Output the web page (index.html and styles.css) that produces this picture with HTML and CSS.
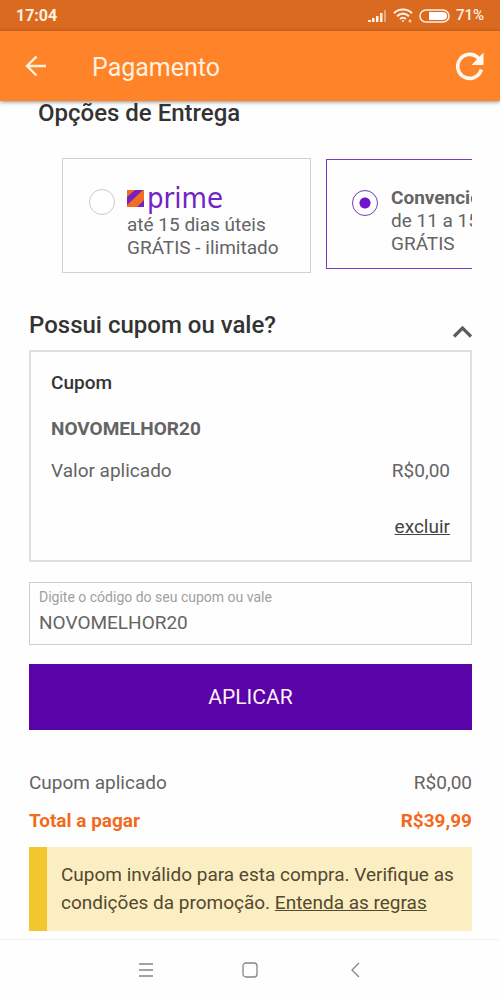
FILE: index.html
```html
<!DOCTYPE html>
<html lang="pt-BR">
<head>
<meta charset="utf-8">
<meta name="viewport" content="width=device-width, initial-scale=1">
<title>Pagamento</title>
<link rel="stylesheet" href="styles.css">
</head>
<body>
<div class="screen">
  <div class="status">
    <span class="clock">17:04</span>
    <span class="indicators">
      <svg width="19" height="14" viewBox="0 0 19 14" fill="#fff1e0"><path d="M0 11h3v2H0zM4 9h2.500v4H4zM8 7h2.500v6H8zM12 4h2.500v9H12z"/><path d="M16 1h2v12h-2z" opacity=".45"/></svg>
      <svg width="20" height="15" viewBox="0 0 20 15" fill="none" stroke="#fff1e0" stroke-width="2"><path d="M1 5.200C6 .4 14 .4 19 5.200M4 8.200c4-3.400 8-3.400 12 0M7 11c2-1.700 4-1.700 6 0"/><circle cx="10" cy="13" r="1" fill="#fff1e0" stroke="none"/><circle cx="17" cy="13" r="1" stroke-width="1"/></svg>
      <svg width="31" height="14" viewBox="0 0 31 14"><rect x="1" y="1" width="29" height="12" rx="6" fill="none" stroke="#fff1e0" stroke-width="1.500"/><path d="M10 3h14a4 4 0 0 1 0 8H10z" fill="#fff"/></svg>
      <span class="battery">71%</span>
    </span>
  </div>
  <header class="appbar">
    <button class="icon-button" aria-label="Voltar"><svg width="22" height="22" viewBox="0 0 22 22" fill="none" stroke="#fff1e0" stroke-width="2.400"><path d="M21 11H2.500M11.500 1.500L2 11l9.500 9.500"/></svg></button>
    <h1 class="title">Pagamento</h1>
    <button class="icon-button" aria-label="Atualizar"><svg width="30" height="30" viewBox="0 0 30 30"><path d="M26.300 18.500A12 12 0 1 1 23.800 7.500" fill="none" stroke="#fff8ef" stroke-width="3.600"/><path d="M28.500 1.500v12.500H16.500z" fill="#fff8ef"/></svg></button>
  </header>
  <main class="content">
    <h2 class="heading delivery-heading">Opções de Entrega</h2>
    <div class="options">
      <label class="option">
        <input class="radio" type="radio" name="entrega">
        <span class="option-text">
          <span class="brand"><svg width="17" height="17" viewBox="0 0 17 17"><path fill="#f36d21" d="M0 0h17v17H0z"/><path fill="#7422c3" d="M8 0h8L0 15V7zM17 10v7H10z"/></svg><span class="brand-name">prime</span></span>
          <span>até 15 dias úteis</span>
          <span>GRÁTIS - ilimitado</span>
        </span>
      </label>
      <label class="option option-selected">
        <input class="radio" type="radio" name="entrega" checked>
        <span class="option-text">
          <strong>Convencional</strong>
          <span>de 11 a 15 dias úteis</span>
          <span>GRÁTIS</span>
        </span>
      </label>
    </div>
    <div class="section-head">
      <h2 class="heading">Possui cupom ou vale?</h2>
      <button class="icon-button" aria-label="Recolher"><svg width="20" height="14" viewBox="0 0 20 14" fill="none" stroke="#5c5c5c" stroke-width="3.200"><path d="M2 11.500L10.500 3l8.500 8.500"/></svg></button>
    </div>
    <section class="coupon">
      <h3 class="coupon-title">Cupom</h3>
      <strong class="coupon-code">NOVOMELHOR20</strong>
      <div class="row"><span>Valor aplicado</span><span>R$0,00</span></div>
      <a class="remove" href="#">excluir</a>
    </section>
    <form class="form">
      <div class="field">
        <label class="field-label" for="codigo">Digite o código do seu cupom ou vale</label>
        <input class="field-input" id="codigo" type="text" value="NOVOMELHOR20">
      </div>
      <button class="apply" type="button">APLICAR</button>
    </form>
    <div class="summary">
      <div class="row"><span>Cupom aplicado</span><span>R$0,00</span></div>
      <div class="row total"><span>Total a pagar</span><span>R$39,99</span></div>
    </div>
    <p class="notice">Cupom inválido para esta compra. Verifique as condições da promoção. <a href="#">Entenda as regras</a></p>
  </main>
  <nav class="system-nav">
    <button class="icon-button" aria-label="Recentes"><svg width="16" height="16" viewBox="0 0 16 16" stroke="#858585" stroke-width="1.300"><path d="M1 2h14M1 8h14M1 14h14"/></svg></button>
    <button class="icon-button" aria-label="Início"><svg width="16" height="16" viewBox="0 0 16 16" fill="none" stroke="#858585" stroke-width="1.300"><rect x="1" y="1" width="14" height="14" rx="3"/></svg></button>
    <button class="icon-button" aria-label="Voltar ao anterior"><svg width="16" height="16" viewBox="0 0 16 16" fill="none" stroke="#858585" stroke-width="1.300"><path d="M13 1L6 8l7 7"/></svg></button>
  </nav>
</div>
</body>
</html>
```
FILE: styles.css
```css
* { box-sizing: border-box; }
body {
  margin: 0;
  background: #fefefe;
  color: #646464;
  font: 19px/23px Roboto, "Noto Sans", sans-serif;
}
h1, h2, h3, p { margin: 0; }
svg { display: block; }
button { border: 0; font: inherit; }
.screen { display: flex; flex-direction: column; min-height: 100vh; }
.status {
  display: flex;
  justify-content: space-between;
  align-items: center;
  height: 31px;
  padding: 0 16px;
  background: #db6a21;
  color: #fff1e0;
  font-size: 16px;
  font-weight: 700;
}
.indicators { display: flex; align-items: center; gap: 6px; }
.battery { font-size: 15px; font-weight: 500; }
.appbar {
  display: flex;
  align-items: center;
  height: 70px;
  padding: 0 15px 0 25px;
  background: #ff8429;
  box-shadow: 0 1px 4px rgba(0, 0, 0, .45);
}
.icon-button { padding: 0; background: none; }
.title {
  flex: 1;
  padding: 4px 0 0 45px;
  color: #fff1e0;
  font-size: 25px;
  font-weight: 400;
  line-height: 30px;
}
.content { flex: 1; padding: 0 28px 8px 29px; }
.heading { color: #333; font-size: 24px; font-weight: 500; line-height: 28px; }
.delivery-heading { padding: 0 9px; line-height: 24px; }
.options {
  display: flex;
  align-items: flex-start;
  gap: 15px;
  margin: 33px 0 0 33px;
  overflow: hidden;
}
.option {
  display: flex;
  flex: none;
  gap: 12px;
  width: 249px;
  padding: 24px 26px 13px 26px;
  border: 1px solid #d2d2d2;
  white-space: nowrap;
}
.option-selected { margin-top: 1px; padding: 26px 26px 13px 25px; gap: 13px; border-color: #773bbb; }
.radio {
  appearance: none;
  flex: none;
  width: 26px;
  height: 26px;
  margin: 6px 0 0;
  border: 1px solid #c8c8c8;
  border-radius: 50%;
  background: #fff;
}
.option-selected .radio { margin-top: 4px; }
.radio:checked {
  border-color: #773bbb;
  background: radial-gradient(circle, #7014cf 5px, #fff 6px);
}
.option-text { display: flex; flex-direction: column; }
.brand { display: flex; align-items: center; gap: 3px; height: 30px; }
.brand-name { color: #7422c3; font: 29px/30px "DejaVu Sans Condensed", "Noto Sans", sans-serif; }
.section-head {
  display: flex;
  justify-content: space-between;
  align-items: flex-end;
  margin-top: 38px;
  padding-bottom: 11px;
}
.coupon {
  display: flex;
  flex-direction: column;
  padding: 19px 20px 22px;
  border: 2px solid #dedede;
}
.coupon-title { color: #333; font-size: 19px; font-weight: 500; }
.coupon-code { margin-top: 23px; }
.row { display: flex; justify-content: space-between; }
.coupon .row { margin-top: 19px; }
.remove { align-self: flex-end; margin-top: 33px; color: #444; }
.form { display: grid; gap: 19px; margin-top: 20px; }
.field { padding: 3px 9px 8px; border: 1px solid #cecece; }
.field-label { display: block; color: #a0a0a0; font-size: 14px; line-height: 22px; }
.field-input {
  display: block;
  width: 100%;
  height: 28px;
  padding: 0;
  border: 0;
  outline: 0;
  background: none;
  color: #646464;
  font: inherit;
}
.apply { height: 66px; background: #5903a9; color: #fff1f5; font-size: 21px; }
.summary { display: grid; gap: 15px; margin-top: 41px; }
.total { color: #f26a1d; font-weight: 700; }
.notice {
  margin-top: 15px;
  padding: 14px 12px 14px 14px;
  border-left: 18px solid #f2c72e;
  background: #fbeec2;
  color: #54482f;
  line-height: 28px;
}
.notice a { color: inherit; }
.system-nav {
  display: flex;
  justify-content: center;
  gap: 88px;
  padding: 22px 0;
  border-top: 1px solid #f2f2f2;
}
```
